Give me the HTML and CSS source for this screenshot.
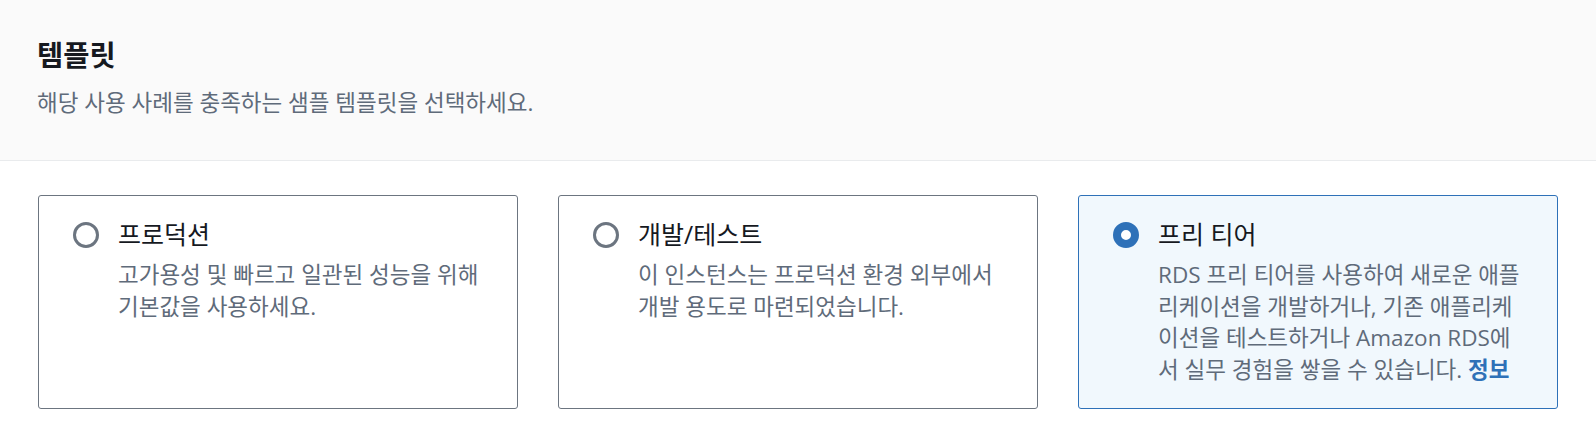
FILE: index.html
```html
<!DOCTYPE html>
<html lang="ko">
<head>
    <meta charset="UTF-8">
    <meta name="viewport" content="width=device-width, initial-scale=1.0">
    <title>템플릿</title>
    <link rel="stylesheet" href="styles.css">
</head>
<body>
    <div class="header">
        <h2>템플릿</h2>
        <p>해당 사용 사례를 충족하는 샘플 템플릿을 선택하세요.</p>
    </div>

    <div class="tiles">
        <!-- Production -->
        <label class="tile">
            <span class="radio"></span>
            <span class="tile-body">
                <span class="tile-title">프로덕션</span>
                <span class="tile-desc">고가용성 및 빠르고 일관된 성능을 위해<br>기본값을 사용하세요.</span>
            </span>
        </label>

        <!-- Dev/Test -->
        <label class="tile">
            <span class="radio"></span>
            <span class="tile-body">
                <span class="tile-title">개발/테스트</span>
                <span class="tile-desc">이 인스턴스는 프로덕션 환경 외부에서<br>개발 용도로 마련되었습니다.</span>
            </span>
        </label>

        <!-- Free tier (selected) -->
        <label class="tile selected">
            <span class="radio"></span>
            <span class="tile-body">
                <span class="tile-title">프리 티어</span>
                <span class="tile-desc">RDS 프리 티어를 사용하여 새로운 애플<br>리케이션을 개발하거나, 기존 애플리케<br>이션을 테스트하거나 Amazon RDS에<br>서 실무 경험을 쌓을 수 있습니다. <a href="#">정보</a></span>
            </span>
        </label>
    </div>
</body>
</html>
```

FILE: styles.css
```css
body {
    font-family: "Open Sans", "Noto Sans CJK KR", sans-serif;
    margin: 0;
    padding: 0;
    background: #ffffff;
    color: #16191f;
}

.header {
    background: #fafafa;
    border-bottom: 1px solid #e9ebed;
    height: 161px;
    box-sizing: border-box;
    padding: 37px 37px 0;
}

.header h2 {
    margin: 0;
    font-size: 28.5px;
    line-height: 36px;
    font-weight: bold;
}

.header p {
    margin: 14px 0 0;
    font-size: 22.5px;
    line-height: 32px;
    color: #5f6b7a;
}

.tiles {
    display: grid;
    grid-template-columns: repeat(3, 1fr);
    gap: 40px;
    padding: 34px 38px 0;
}

.tile {
    display: flex;
    align-items: flex-start;
    gap: 19px;
    height: 214px;
    box-sizing: border-box;
    padding: 22px 24px 24px 34px;
    border: 1px solid #6c7580;
    border-radius: 3px;
    background: #ffffff;
    cursor: pointer;
}

.tile.selected {
    border-color: #2e71b8;
    background: #f1f8fd;
}

.radio {
    flex: none;
    width: 26px;
    height: 26px;
    margin-top: 4px;
    box-sizing: border-box;
    border: 3px solid #6c7580;
    border-radius: 50%;
    background: #ffffff;
}

.selected .radio {
    border: 8px solid #2e71b8;
}

.tile-body {
    display: flex;
    flex-direction: column;
}

.tile-title {
    font-size: 25px;
    line-height: 33px;
}

.tile-desc {
    margin-top: 8px;
    font-size: 22.5px;
    line-height: 31.5px;
    color: #5f6b7a;
    white-space: nowrap;
}

.tile-desc a {
    color: #2e71b8;
    font-weight: bold;
    text-decoration: none;
}
```
